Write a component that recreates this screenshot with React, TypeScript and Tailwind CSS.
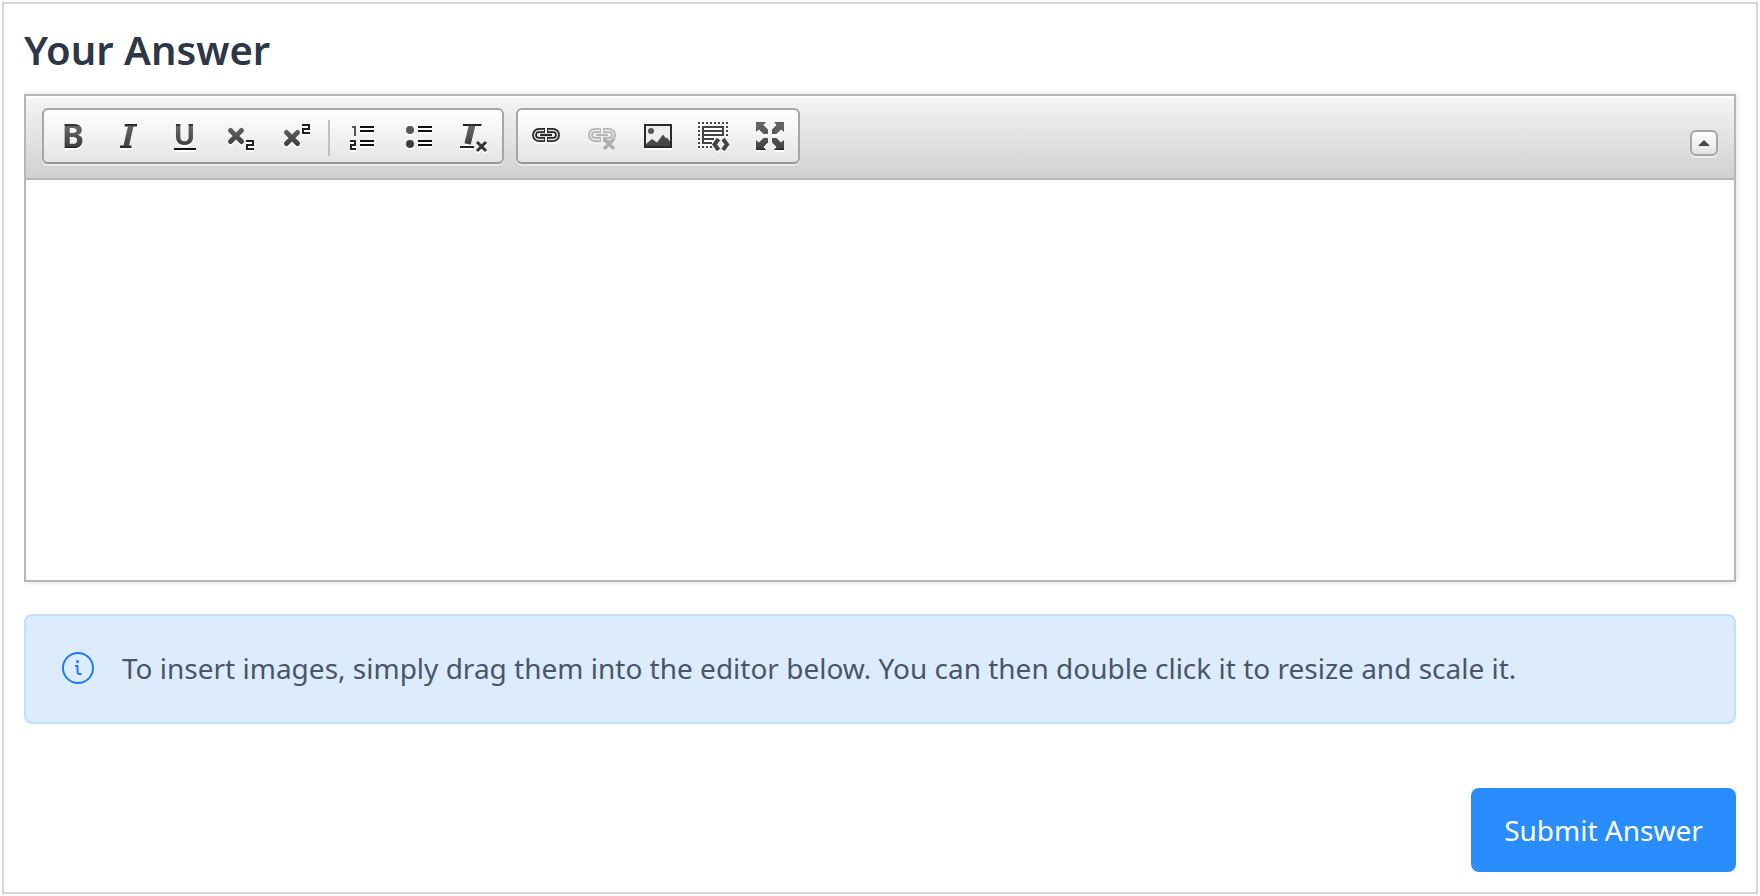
import type { ReactNode } from "react";

function Icon({ label, faded = false, children }: { label: string; faded?: boolean; children: ReactNode }) {
  return (
    <button
      aria-label={label}
      className={"flex h-[52px] w-14 shrink-0 items-center justify-center " + (faded ? "opacity-30" : "")}
    >
      <svg
        width="32"
        height="32"
        viewBox="0 0 32 32"
        fill="none"
        className="overflow-visible drop-shadow-[0_2px_0_#ffffff]"
      >
        {children}
      </svg>
    </button>
  );
}

const INK = "url(#ink)";
const TWO = "h7v4h-6v4h7";
const letter = "font-['Noto_Sans',sans-serif] font-bold";

function LinkShape() {
  return (
    <>
      <path d="M15 10.5H9a4.500 4.500 0 0 0 0 9h6M17 10.5H23a4.500 4.500 0 0 1 0 9h-6" stroke="#2a2a2a" strokeWidth="5" />
      <path d="M14 10.5H9a4.500 4.500 0 0 0 0 9h5M18 10.5H23a4.500 4.500 0 0 1 0 9h-5" stroke="#ddd" strokeWidth="1.4" />
      <path d="M10 15h12" stroke="#2a2a2a" strokeWidth="2.4" />
    </>
  );
}

export default function App() {
  return (
    <main className="p-0.5 font-['Noto_Sans',sans-serif]">
      <svg width="0" height="0" className="absolute" aria-hidden="true">
        <defs>
          <linearGradient id="ink" gradientUnits="userSpaceOnUse" x1="0" y1="4" x2="0" y2="28">
            <stop offset="0" stopColor="#2a2a2a" />
            <stop offset="0.07" stopColor="#333" />
            <stop offset="0.09" stopColor="#666" />
            <stop offset="0.9" stopColor="#404040" />
            <stop offset="1" stopColor="#1a1a1a" />
          </linearGradient>
          <linearGradient id="arrows" gradientUnits="userSpaceOnUse" x1="0" y1="2" x2="0" y2="30">
            <stop offset="0" stopColor="#555" />
            <stop offset="0.06" stopColor="#666" />
            <stop offset="0.92" stopColor="#444" />
            <stop offset="1" stopColor="#1a1a1a" />
          </linearGradient>
        </defs>
      </svg>
      <section className="flex h-[892px] w-[1756px] flex-col border-2 border-[#d6d6d6] bg-white px-5">
        <h1 className="mt-[19px] h-[71px] text-[40px] leading-[54px] font-semibold text-[#2d3748]">Your Answer</h1>

        <div className="h-[488px] shrink-0 border-2 border-[#b6b6b6] bg-white shadow-[0_0_6px_rgba(0,0,0,0.15)] [clip-path:inset(-12px_-12px_-12px_0)]">
          <div className="flex h-[84px] items-start justify-between border-b-2 border-[#b6b6b6] bg-linear-to-b from-[#f5f5f5] to-[#cfd1cf] pt-3 pr-4 pl-4 shadow-[inset_0_2px_0_#ffffff]">
            <div className="flex gap-3">
              <div className="flex h-14 rounded-md border-2 border-[#a6a6a6] border-b-[#979797] bg-linear-to-b from-white to-[#e4e4e4] shadow-[0_2px_0_rgba(255,255,255,0.5)]">
                <Icon label="Bold">
                  <text x="5.7" y="28" fontSize="33.6" fill={INK} className={letter}>B</text>
                </Icon>
                <Icon label="Italic">
                  <path d="M12.700 5.300H25M8 26.700h11.500" stroke="#2a2a2a" strokeWidth="2.600" />
                  <path d="M19 5 14 27" stroke={INK} strokeWidth="5.500" />
                </Icon>
                <Icon label="Underline">
                  <text x="5.5" y="25" fontSize="29" fill={INK} className={letter}>U</text>
                  <path d="M6 29h22" stroke="#111" strokeWidth="2" />
                </Icon>
                <Icon label="Subscript">
                  <path d="m6.5 10.5 11 11m0-11-11 11" stroke={INK} strokeWidth="5" strokeLinecap="round" />
                  <path d={"M22 21" + TWO} stroke="#222" strokeWidth="2" />
                </Icon>
                <Icon label="Superscript">
                  <path d="m6.5 12.5 11 11m0-11-11 11" stroke={INK} strokeWidth="5" strokeLinecap="round" />
                  <path d={"M22 5" + TWO} stroke="#222" strokeWidth="2" />
                </Icon>
                <div className="mx-1 mt-[10px] h-9 w-0.5 bg-[#c0c0c0]" />
                <Icon label="Numbered list">
                  <path d="M6 7h3v9" stroke="#555" strokeWidth="2" />
                  <path d="M4 21h5v4H5v4h5" stroke="#222" strokeWidth="2" />
                  <path d="M14 7h14M14 11h14M14 21h14M14 25h14" stroke="#111" strokeWidth="2" />
                </Icon>
                <Icon label="Bulleted list">
                  <circle cx="8" cy="10" r="4" fill="#555" />
                  <circle cx="8" cy="24" r="4" fill="#3d3d3d" />
                  <path d="M16 7h14M16 11h14M16 21h14M16 25h14" stroke="#111" strokeWidth="2" />
                </Icon>
                <Icon label="Remove format">
                  <path d="M5 5h18.5M2 27h14" stroke="#222" strokeWidth="2" />
                  <path d="M14.2 5 9.6 24" stroke={INK} strokeWidth="6.5" />
                  <path d="m19 22 9 9m0-9-9 9" stroke="#333" strokeWidth="3" />
                </Icon>
              </div>
              <div className="flex h-14 rounded-md border-2 border-[#a6a6a6] border-b-[#979797] bg-linear-to-b from-white to-[#e4e4e4] shadow-[0_2px_0_rgba(255,255,255,0.5)]">
                <Icon label="Link">
                  <LinkShape />
                </Icon>
                <Icon label="Unlink" faded>
                  <LinkShape />
                  <path d="m18 19 10 10m0-10-10 10" stroke="#222" strokeWidth="3.5" />
                </Icon>
                <Icon label="Image">
                  <path d="M3 5h26v22H3z" stroke="#2a2a2a" strokeWidth="2" fill="#eee" />
                  <circle cx="9" cy="11" r="3" fill="#555" />
                  <path d="M4 26v-2l6-5 5 3.500 6-8 3 4 1-1 3 4V26z" fill="#484848" />
                </Icon>
                <Icon label="Templates">
                  <path d="M0 3h30M0 27h14" stroke="#444" strokeWidth="2" strokeDasharray="2 2" />
                  <path d="M1 6v20M29 6v12" stroke="#444" strokeWidth="2" strokeDasharray="2 2" />
                  <path d="M5 24V7h20v8H5M5 11h20M5 19h11M5 23h9" stroke="#444" strokeWidth="2" />
                  <path d="m20.500 19-4 5.500 4 5.500M25 19l4 5.500-4 5.500" stroke="#444" strokeWidth="4" />
                </Icon>
                <Icon label="Maximize">
                  <path
                    d="M2 2h10L9.500 5 14 9.500V14H9.500L5 9.500 2 12zM30 2H20l2.500 3L18 9.500V14h4.500L27 9.500l3 2.500zM2 30h10l-2.500-3 4.500-4.500V18H9.500L5 22.500 2 20zM30 30H20l2.500-3-4.500-4.500V18h4.500l4.500 4.500 3-2.500z"
                    fill="url(#arrows)"
                  />
                </Icon>
              </div>
            </div>
            <button
              aria-label="Collapse toolbar"
              className="mt-[22px] flex h-[26px] w-7 items-center justify-center rounded-md border-2 border-[#a6a6a6] bg-linear-to-b from-white to-[#e4e4e4] shadow-[0_2px_0_rgba(255,255,255,0.5)]"
            >
              <svg width="12" height="6" viewBox="0 0 12 6">
                <path d="M6 0l6 6H0z" fill="#474747" />
              </svg>
            </button>
          </div>
        </div>

        <div className="mt-8 flex h-[110px] shrink-0 items-center rounded-lg border-2 border-[#bfdfff] bg-[#dcecfd] pb-0.5 pl-9 text-[28px] text-[#4a5568]">
          <svg width="32" height="32" viewBox="0 0 32 32" fill="none" stroke="#1a75ff" strokeWidth="1.9" className="shrink-0">
            <circle cx="16" cy="16" r="15" />
            <path d="M13 14h2.500v6.500q0 1.500 1.500 1.500h2.500" />
            <circle cx="15.500" cy="9.500" r="1.500" fill="#1a75ff" stroke="none" />
          </svg>
          <p className="ml-7 whitespace-nowrap">
            To insert images, simply drag them into the editor below. You can then double click it to resize and scale it.
          </p>
        </div>

        <button className="mt-16 h-[84px] w-[265px] shrink-0 self-end rounded-lg bg-[#2a8dfd] text-[28px] whitespace-nowrap text-white">
          Submit Answer
        </button>
      </section>
    </main>
  );
}
